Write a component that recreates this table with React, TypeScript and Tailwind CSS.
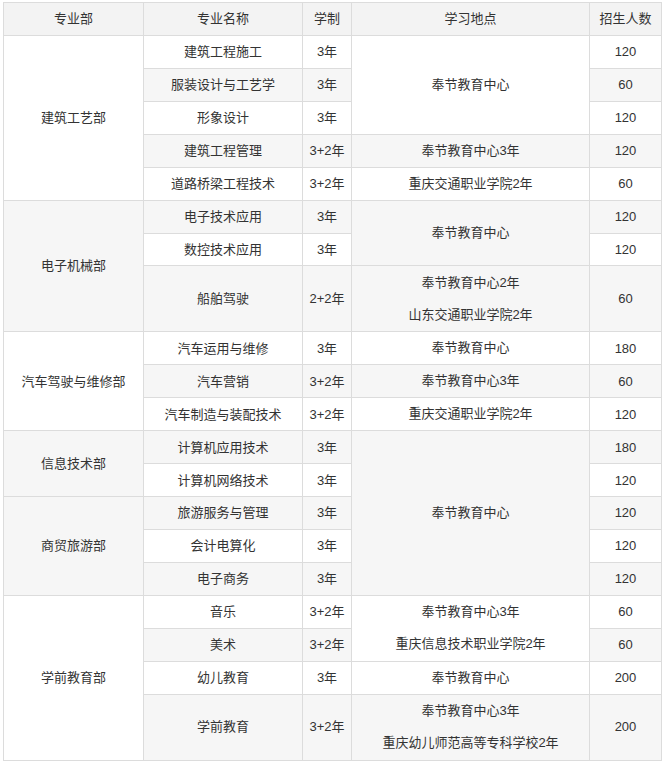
type Row = {
  dept?: { name: string; span: number };
  major: string;
  years: string;
  place?: { lines: string[]; span: number };
  count: string;
  tall?: boolean;
};

const rows: Row[] = [
  { dept: { name: "建筑工艺部", span: 5 }, major: "建筑工程施工", years: "3年", place: { lines: ["奉节教育中心"], span: 3 }, count: "120" },
  { major: "服装设计与工艺学", years: "3年", count: "60" },
  { major: "形象设计", years: "3年", count: "120" },
  { major: "建筑工程管理", years: "3+2年", place: { lines: ["奉节教育中心3年"], span: 1 }, count: "120" },
  { major: "道路桥梁工程技术", years: "3+2年", place: { lines: ["重庆交通职业学院2年"], span: 1 }, count: "60" },
  { dept: { name: "电子机械部", span: 3 }, major: "电子技术应用", years: "3年", place: { lines: ["奉节教育中心"], span: 2 }, count: "120" },
  { major: "数控技术应用", years: "3年", count: "120" },
  { major: "船舶驾驶", years: "2+2年", place: { lines: ["奉节教育中心2年", "山东交通职业学院2年"], span: 1 }, count: "60", tall: true },
  { dept: { name: "汽车驾驶与维修部", span: 3 }, major: "汽车运用与维修", years: "3年", place: { lines: ["奉节教育中心"], span: 1 }, count: "180" },
  { major: "汽车营销", years: "3+2年", place: { lines: ["奉节教育中心3年"], span: 1 }, count: "60" },
  { major: "汽车制造与装配技术", years: "3+2年", place: { lines: ["重庆交通职业学院2年"], span: 1 }, count: "120" },
  { dept: { name: "信息技术部", span: 2 }, major: "计算机应用技术", years: "3年", place: { lines: ["奉节教育中心"], span: 5 }, count: "180" },
  { major: "计算机网络技术", years: "3年", count: "120" },
  { dept: { name: "商贸旅游部", span: 3 }, major: "旅游服务与管理", years: "3年", count: "120" },
  { major: "会计电算化", years: "3年", count: "120" },
  { major: "电子商务", years: "3年", count: "120" },
  { dept: { name: "学前教育部", span: 4 }, major: "音乐", years: "3+2年", place: { lines: ["奉节教育中心3年", "重庆信息技术职业学院2年"], span: 2 }, count: "60" },
  { major: "美术", years: "3+2年", count: "60" },
  { major: "幼儿教育", years: "3年", place: { lines: ["奉节教育中心"], span: 1 }, count: "200" },
  { major: "学前教育", years: "3+2年", place: { lines: ["奉节教育中心3年", "重庆幼儿师范高等专科学校2年"], span: 1 }, count: "200", tall: true },
];

const cell = "border border-[#dcdcdc] text-center align-middle p-0";

export default function App() {
  return (
    <div className="bg-white w-[665px] h-[764px] pt-[2px] pl-[3px] font-['Liberation_Sans','Noto_Sans_CJK_SC',sans-serif] text-[13px] text-[#333]">
      <table className="border-collapse table-fixed w-[658px]">
        <colgroup>
          <col className="w-[140px]" />
          <col className="w-[159px]" />
          <col className="w-[49px]" />
          <col className="w-[238px]" />
          <col className="w-[72px]" />
        </colgroup>
        <thead>
          <tr className="h-[33px] bg-[#f3f3f3]">
            <th className={`${cell} font-normal`}>专业部</th>
            <th className={`${cell} font-normal`}>专业名称</th>
            <th className={`${cell} font-normal`}>学制</th>
            <th className={`${cell} font-normal`}>学习地点</th>
            <th className={`${cell} font-normal`}>招生人数</th>
          </tr>
        </thead>
        <tbody>
          {rows.map((r, i) => (
            <tr
              key={r.major}
              className={`${r.tall ? "h-[66px]" : "h-[32.9px]"} ${i % 2 === 1 ? "bg-[#f6f6f6]" : "bg-white"}`}
            >
              {r.dept && (
                <td rowSpan={r.dept.span} className={cell}>
                  {r.dept.name}
                </td>
              )}
              <td className={cell}>{r.major}</td>
              <td className={cell}>{r.years}</td>
              {r.place && (
                <td rowSpan={r.place.span} className={cell}>
                  {r.place.lines.map((l) => (
                    <p key={l} className="leading-[32px]">
                      {l}
                    </p>
                  ))}
                </td>
              )}
              <td className={cell}>{r.count}</td>
            </tr>
          ))}
        </tbody>
      </table>
    </div>
  );
}
